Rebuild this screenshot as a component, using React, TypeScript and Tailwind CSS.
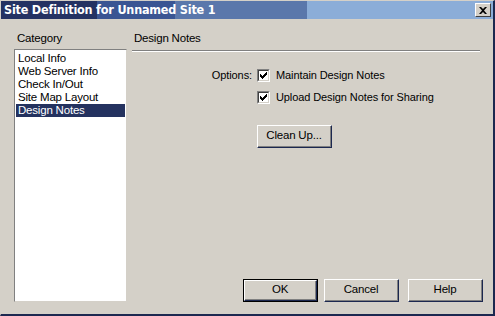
import React from "react";

const font = { fontFamily: '"Liberation Sans", Arial, sans-serif' };

function Check() {
  return (
    <span className="w-[13px] h-[13px] bg-white border-t border-l border-t-[#808080] border-l-[#808080] border-r border-b border-r-white border-b-white flex items-center justify-center shrink-0">
      <span className="w-[11px] h-[11px] border-t border-l border-t-[#404040] border-l-[#404040] border-r border-b border-r-[#d4d0c8] border-b-[#d4d0c8] flex items-center justify-center">
        <svg width="7" height="7" viewBox="0 0 7 7">
          <path d="M0 2h1v1h1v1h1v-1h1v-1h1v-1h1v-1h1v3h-1v1h-1v1h-1v1h-1v1h-1v-1h-1v-1h-1z" fill="#000" />
        </svg>
      </span>
    </span>
  );
}

function Btn({ label, def, w }: { label: string; def?: boolean; w: string }) {
  return (
    <div className={`${w} h-[23px] ${def ? "border border-black" : ""} flex`}>
      <div className="flex-1 border-t border-l border-t-white border-l-white border-r border-b border-r-[#1c2850] border-b-[#1c2850] flex">
        <div className="flex-1 border-r border-b border-r-[#808080] border-b-[#808080] flex items-center justify-center text-[11.5px] tracking-[-0.2px] text-black">
          {label}
        </div>
      </div>
    </div>
  );
}

export default function App() {
  const items = ["Local Info", "Web Server Info", "Check In/Out", "Site Map Layout", "Design Notes"];
  return (
    <div style={font} className="w-[495px] h-[316px] bg-[#d4d0c8] border-t border-l border-t-[#d4d0c8] border-l-[#d4d0c8] border-r-2 border-b-2 border-r-[#1c2850] border-b-[#1c2850] flex flex-col overflow-hidden">
      <div className="h-[18px] flex items-center justify-between bg-[linear-gradient(to_right,#243263_0_96px,#3a5593_96px_174px,#5a77ab_174px_306px,#8badd8_306px)]">
        <span
          className="pl-[3px] text-white font-bold leading-none whitespace-nowrap tracking-[-0.2px]"
          style={{ fontFamily: '"DejaVu Sans Condensed", "DejaVu Sans", Verdana, sans-serif', fontStretch: "condensed", fontSize: 12.5 }}
        >
          Site Definition for Unnamed Site 1
        </span>
        <div className="w-[16px] h-[14px] mr-[2px] bg-[#d4d0c8] border-t border-l border-t-white border-l-white border-r border-b border-r-[#404040] border-b-[#404040] flex items-center justify-center">
          <svg width="8" height="7" viewBox="0 0 8 7">
            <path d="M0 0h2l2 2 2-2h2l-3 3.5 3 3.5h-2l-2-2-2 2h-2l3-3.5z" fill="#000" />
          </svg>
        </div>
      </div>
      <div className="flex-1 flex pl-[13px] pt-[12px] pr-[10px] pb-[12px] text-[11.5px] tracking-[-0.2px] text-black">
        <div className="w-[113px] flex flex-col">
          <div className="pl-[3px] h-[18px] leading-[14px]">Category</div>
          <div className="flex-1 bg-white border-t border-l border-t-[#808080] border-l-[#808080] border-r border-b border-r-[#d4d0c8] border-b-[#d4d0c8] pt-[2px] px-[1px]">
            {items.map((it) => (
              <div
                key={it}
                className={`h-[13px] leading-[13px] pl-[2px] ${it === "Design Notes" ? "bg-[#24325f] text-white" : ""}`}
              >
                {it}
              </div>
            ))}
          </div>
        </div>
        <div className="flex-1 flex flex-col pl-[5px]">
          <div className="pl-[2px] h-[19px] leading-[14px]">Design Notes</div>
          <div className="border-t border-t-[#808080] border-b border-b-white mr-[3px]" />
          <div className="flex flex-col mt-[16px] pl-[78px] text-[11px] tracking-[-0.1px]">
            <div className="flex items-center h-[14px]">
              <span className="w-[42px] text-right mr-[5px]">Options:</span>
              <Check />
              <span className="ml-[6px]">Maintain Design Notes</span>
            </div>
            <div className="flex items-center h-[14px] mt-[8px] pl-[47px]">
              <Check />
              <span className="ml-[6px]">Upload Design Notes for Sharing</span>
            </div>
            <div className="mt-[21px] pl-[47px]">
              <Btn label="Clean Up..." w="w-[75px]" />
            </div>
          </div>
          <div className="flex-1" />
          <div className="flex justify-end">
            <Btn label="OK" def w="w-[75px]" />
            <div className="w-[6px]" />
            <Btn label="Cancel" w="w-[75px]" />
            <div className="w-[9px]" />
            <Btn label="Help" w="w-[75px]" />
          </div>
        </div>
      </div>
    </div>
  );
}
